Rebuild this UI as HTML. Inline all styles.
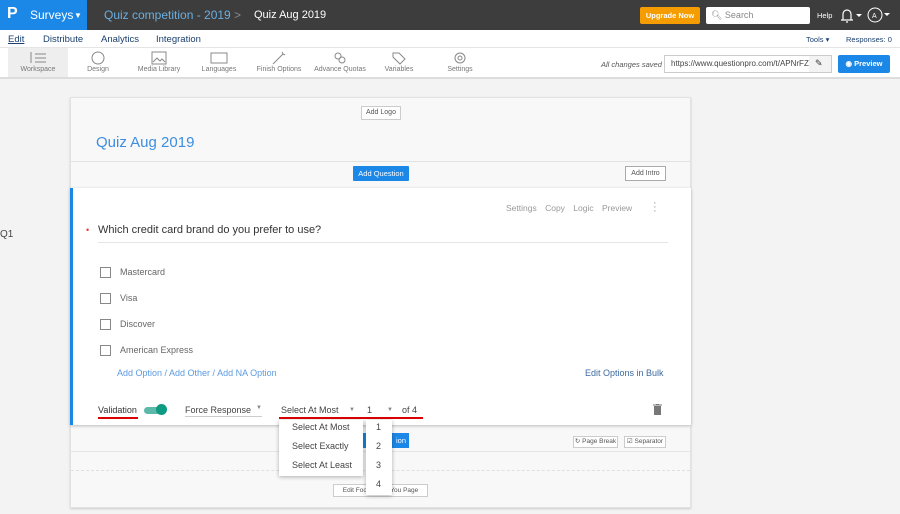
<!DOCTYPE html>
<html><head><meta charset="utf-8"><style>
*{box-sizing:border-box;margin:0;padding:0}
body{width:900px;height:514px;overflow:hidden;background:#f3f3f3;font-family:"Liberation Sans",sans-serif;position:relative;font-size:11px;color:#333}
.a{position:absolute}
.top{left:0;top:0;width:900px;height:30px;background:#3d3d3d}
.logo{left:0;top:0;width:87px;height:30px;background:#1b87e6;color:#fff}
.nav{left:0;top:30px;width:900px;height:18px;background:#fff;border-bottom:1px solid #e5e5e5}
.tb{left:0;top:48px;width:900px;height:31px;background:#fff;border-bottom:2px solid #ddd}
.ti{top:0;height:29px;text-align:center;font-size:7px;color:#777}
.ti svg{display:block;margin:3px auto 1px}
.card{left:70px;top:97px;width:621px;height:411px;background:#f8f8f8;border:1px solid #e2e2e2;box-shadow:0 1px 2px #ccc}
.btn{position:absolute;background:#fff;border:1px solid #ccc;font-size:7px;color:#555;text-align:center}
.q{left:70px;top:188px;width:621px;height:237px;background:#fff;border-left:3px solid #1b87e6;box-shadow:0 1px 3px #bbb}
.cb{position:absolute;left:27px;width:11px;height:11px;border:1px solid #888}
.opt{position:absolute;left:47px;font-size:9px;color:#666}
.dd{background:#fff;box-shadow:0 1px 4px rgba(0,0,0,.3);font-size:9px;color:#444}
</style></head><body>
<div class="a top"></div>
<div class="a logo"><span class="a" style="left:7px;top:5px;font-size:16px;font-weight:bold">P</span><span class="a" style="left:30px;top:8px;font-size:12px">Surveys</span><span class="a" style="left:74px;top:11px;font-size:8px">▼</span></div>
<div class="a" style="left:104px;top:8px;font-size:12px;color:#6aaee0">Quiz competition - 2019</div>
<div class="a" style="left:234px;top:8px;font-size:12px;color:#888">&gt;</div>
<div class="a" style="left:254px;top:9px;font-size:11px;color:#fff">Quiz Aug 2019</div>
<div class="a" style="left:640px;top:7px;width:60px;height:17px;background:#f59c00;border-radius:2px;color:#fff;font-size:7.5px;font-weight:bold;text-align:center;line-height:17px">Upgrade Now</div>
<div class="a" style="left:706px;top:7px;width:104px;height:17px;background:#fff;border-radius:2px;color:#888;font-size:9px;line-height:17px;padding-left:5px">&#x1F50D;&#xFE0E; Search</div>
<div class="a" style="left:817px;top:11px;font-size:7.5px;color:#fff">Help</div>
<svg class="a" style="left:838px;top:5px" width="62" height="20"><path d="M3 15h12M5 15V9a4 4 0 0 1 8 0v6M8 17h2" stroke="#fff" fill="none" stroke-width="1.2"/><path d="M18 9l3 3 3-3z" fill="#fff"/><circle cx="37" cy="10" r="7" stroke="#fff" fill="none"/><text x="34" y="13" fill="#fff" font-size="7" font-family="Liberation Sans">A</text><path d="M46 8l3 3 3-3z" fill="#fff"/></svg>
<div class="a nav"></div>
<div class="a" style="left:8px;top:34px;font-size:9.5px;color:#1a3f6e;text-decoration:underline">Edit</div>
<div class="a" style="left:43px;top:34px;font-size:9.5px;color:#1a3f6e">Distribute</div>
<div class="a" style="left:101px;top:34px;font-size:9.5px;color:#1a3f6e">Analytics</div>
<div class="a" style="left:156px;top:34px;font-size:9.5px;color:#1a3f6e">Integration</div>
<div class="a" style="left:806px;top:35px;font-size:7.5px;color:#1a3f6e">Tools ▾</div>
<div class="a" style="left:846px;top:35px;font-size:7.5px;color:#1a3f6e">Responses: 0</div>
<div class="a tb">
<div class="a ti" style="left:8px;width:60px;background:#eee"><svg width="18" height="14"><path d="M2 1v11M6 3h11M6 7h11M6 11h11" stroke="#888"/></svg>Workspace</div>
<div class="a ti" style="left:78px;width:40px"><svg width="16" height="14"><circle cx="8" cy="7" r="6" stroke="#888" fill="none"/></svg>Design</div>
<div class="a ti" style="left:132px;width:54px"><svg width="16" height="14"><rect x="1" y="1" width="14" height="12" stroke="#888" fill="none"/><path d="M2 11l4-4 3 3 2-2 3 3" stroke="#888" fill="none"/></svg>Media Library</div>
<div class="a ti" style="left:198px;width:42px"><svg width="18" height="14"><rect x="1" y="2" width="16" height="10" stroke="#888" fill="none"/></svg>Languages</div>
<div class="a ti" style="left:254px;width:50px"><svg width="16" height="14"><path d="M2 13L12 3M11 1l1 2 2 1" stroke="#888" fill="none"/></svg>Finish Options</div>
<div class="a ti" style="left:313px;width:54px"><svg width="16" height="14"><circle cx="6" cy="5" r="3" stroke="#888" fill="none"/><circle cx="10" cy="9" r="3" stroke="#888" fill="none"/></svg>Advance Quotas</div>
<div class="a ti" style="left:380px;width:38px"><svg width="16" height="14"><path d="M2 2h6l6 6-5 5-7-7z" stroke="#888" fill="none"/></svg>Variables</div>
<div class="a ti" style="left:444px;width:32px"><svg width="16" height="14"><circle cx="8" cy="7" r="5" stroke="#888" fill="none"/><circle cx="8" cy="7" r="2" stroke="#888" fill="none"/></svg>Settings</div>
<div class="a" style="left:601px;top:12px;font-size:7.5px;font-style:italic;color:#555">All changes saved</div>
<div class="a" style="left:664px;top:7px;width:168px;height:18px;border:1px solid #ccc;background:#f3f3f3"><div style="width:144px;height:16px;background:#fff;font-size:8px;color:#444;line-height:16px;padding-left:6px;overflow:hidden;white-space:nowrap">https://www.questionpro.com/t/APNrFZ</div><span class="a" style="left:150px;top:2px;font-size:9px">✎</span></div>
<div class="a" style="left:838px;top:7px;width:52px;height:18px;background:#1b87e6;border-radius:2px;color:#fff;font-size:7.5px;font-weight:bold;text-align:center;line-height:18px">◉ Preview</div>
</div>
<div class="a" style="left:0;top:229px;font-size:10px;color:#444">Q1</div>
<div class="a card">
<div class="btn" style="left:290px;top:8px;width:40px;height:14px;line-height:12px">Add Logo</div>
<div class="a" style="left:25px;top:36px;font-size:15px;color:#3d8ee0">Quiz Aug 2019</div>
<div class="a" style="left:0;top:63px;width:619px;border-top:1px solid #e2e2e2"></div>
<div class="a" style="left:282px;top:68px;width:56px;height:15px;background:#1b87e6;color:#fff;font-size:7.5px;text-align:center;line-height:15px;border-radius:1px">Add Question</div>
<div class="btn" style="left:554px;top:68px;width:41px;height:15px;line-height:13px;border-color:#aaa">Add Intro</div>
<div class="a" style="left:282px;top:335px;width:56px;height:15px;background:#1b87e6;color:#fff;font-size:7.5px;text-align:right;line-height:15px;padding-right:3px">ion</div>
<div class="a" style="left:0;top:353px;width:619px;border-top:1px solid #e6e6e6"></div>
<div class="btn" style="left:502px;top:338px;width:45px;height:12px;line-height:10px;font-size:6.5px">↻ Page Break</div>
<div class="btn" style="left:553px;top:338px;width:42px;height:12px;line-height:10px;font-size:6.5px">☑ Separator</div>
<div class="a" style="left:0;top:372px;width:619px;border-top:1px dashed #e0e0e0"></div>
<div class="btn" style="left:262px;top:386px;width:95px;height:13px;line-height:11px;font-size:6.5px">Edit Footer &nbsp;&nbsp;&nbsp;&nbsp;&nbsp;k You Page</div>
</div>
<div class="a q">
<div class="a" style="left:433px;top:15px;font-size:8.5px;color:#999;word-spacing:6px">Settings Copy Logic Preview</div>
<div class="a" style="left:580px;top:13px;font-size:11px;color:#999;line-height:4px">·<br>·<br>·</div>
<div class="a" style="left:13px;top:37px;color:#e33;font-size:9px">•</div>
<div class="a" style="left:25px;top:36px;font-size:11px;color:#333">Which credit card brand do you prefer to use?</div>
<div class="a" style="left:25px;top:54px;width:570px;border-top:1px solid #e5e5e5"></div>
<div class="cb" style="top:79px"></div><div class="opt" style="top:79px">Mastercard</div>
<div class="cb" style="top:105px"></div><div class="opt" style="top:105px">Visa</div>
<div class="cb" style="top:131px"></div><div class="opt" style="top:131px">Discover</div>
<div class="cb" style="top:157px"></div><div class="opt" style="top:157px">American Express</div>
<div class="a" style="left:44px;top:180px;font-size:9px;color:#5a9ae0">Add Option / Add Other / Add NA Option</div>
<div class="a" style="left:512px;top:180px;font-size:9px;color:#3d6aa0">Edit Options in Bulk</div>
<div class="a" style="left:25px;top:217px;font-size:9px;color:#333">Validation</div>
<div class="a" style="left:25px;top:229px;width:40px;border-top:2px solid #d00"></div>
<div class="a" style="left:71px;top:219px;width:22px;height:7px;background:#5cb8a8;border-radius:4px"></div>
<div class="a" style="left:83px;top:216px;width:11px;height:11px;background:#0f9a82;border-radius:50%"></div>
<div class="a" style="left:112px;top:217px;font-size:9px;color:#444;width:77px;border-bottom:1px solid #ccc;padding-bottom:1px">Force Response <span style="float:right;font-size:6px;color:#888">▼</span></div>
<div class="a" style="left:208px;top:217px;font-size:9px;color:#444">Select At Most</div>
<div class="a" style="left:276px;top:219px;font-size:6px;color:#888">▼</div>
<div class="a" style="left:294px;top:217px;font-size:9px;color:#444">1</div>
<div class="a" style="left:314px;top:219px;font-size:6px;color:#888">▼</div>
<div class="a" style="left:329px;top:217px;font-size:9px;color:#444">of 4</div>
<div class="a" style="left:206px;top:229px;width:144px;border-top:2px solid #d00"></div>
<svg class="a" style="left:580px;top:216px" width="9" height="11"><path d="M0 1h9M3 0h3" stroke="#777"/><rect x="1" y="2" width="7" height="9" fill="#777"/></svg>
</div>
<div class="a dd" style="left:279px;top:420px;width:84px;height:56px">
<div class="a" style="left:13px;top:2px">Select At Most</div>
<div class="a" style="left:13px;top:21px">Select Exactly</div>
<div class="a" style="left:13px;top:40px">Select At Least</div>
</div>
<div class="a dd" style="left:366px;top:420px;width:26px;height:75px">
<div class="a" style="left:10px;top:2px">1</div>
<div class="a" style="left:10px;top:21px">2</div>
<div class="a" style="left:10px;top:40px">3</div>
<div class="a" style="left:10px;top:59px">4</div>
</div>
</body></html>
